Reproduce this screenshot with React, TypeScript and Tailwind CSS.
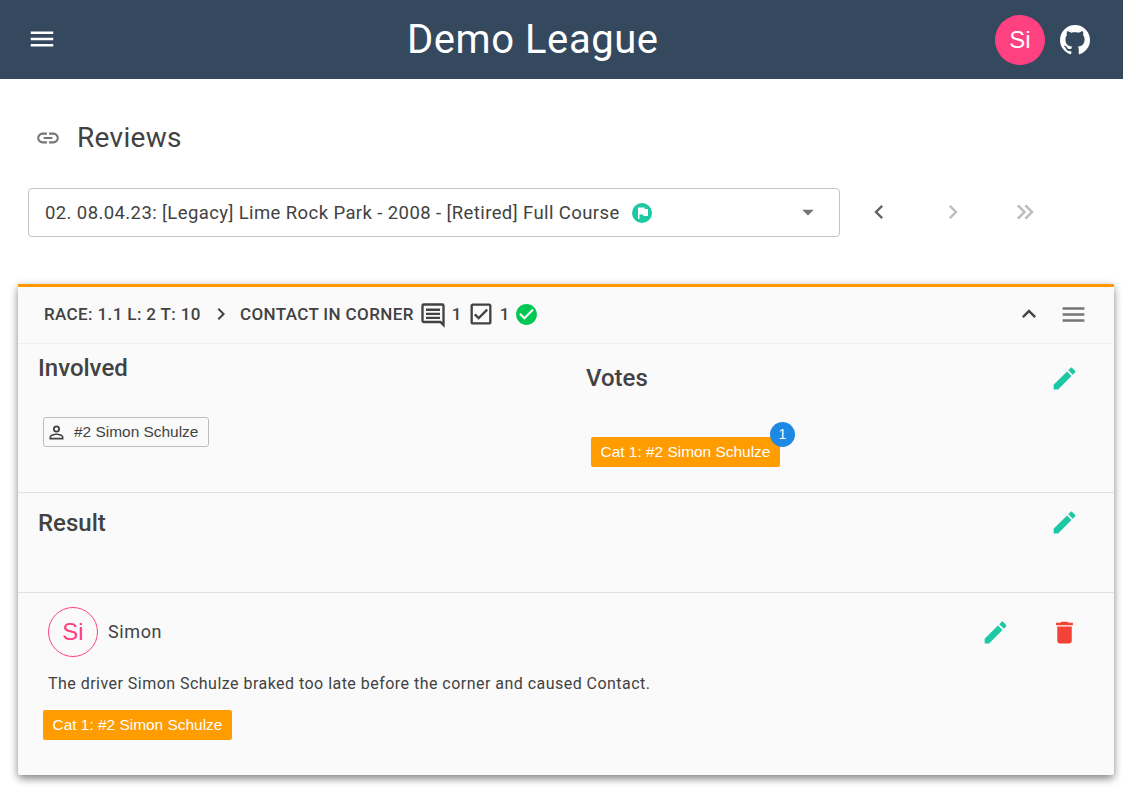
import type { ReactNode } from 'react';

const paths = {
  menu: 'M3,6H21V8H3V6M3,11H21V13H3V11M3,16H21V18H3V16Z',
  link: 'M3.9,12C3.9,10.29 5.29,8.9 7,8.9H11V7H7A5,5 0 0,0 2,12A5,5 0 0,0 7,17H11V15.1H7C5.29,15.1 3.9,13.71 3.9,12M8,13H16V11H8V13M17,7H13V8.9H17C18.71,8.9 20.1,10.29 20.1,12C20.1,13.71 18.71,15.1 17,15.1H13V17H17A5,5 0 0,0 22,12A5,5 0 0,0 17,7Z',
  github:
    'M12,2A10,10 0 0,0 2,12C2,16.42 4.87,20.17 8.84,21.5C9.34,21.58 9.5,21.27 9.5,21C9.5,20.77 9.5,20.14 9.5,19.31C6.73,19.91 6.14,17.97 6.14,17.97C5.68,16.81 5.03,16.5 5.03,16.5C4.12,15.88 5.1,15.9 5.1,15.9C6.1,15.97 6.63,16.93 6.63,16.93C7.5,18.45 8.97,18 9.54,17.76C9.63,17.11 9.89,16.67 10.17,16.42C7.95,16.17 5.62,15.31 5.62,11.5C5.62,10.39 6,9.5 6.65,8.79C6.55,8.54 6.2,7.5 6.75,6.15C6.75,6.15 7.59,5.88 9.5,7.17C10.29,6.95 11.15,6.84 12,6.84C12.85,6.84 13.71,6.95 14.5,7.17C16.41,5.88 17.25,6.15 17.25,6.15C17.8,7.5 17.45,8.54 17.35,8.79C18,9.5 18.38,10.39 18.38,11.5C18.38,15.32 16.04,16.16 13.81,16.41C14.17,16.72 14.5,17.33 14.5,18.26C14.5,19.6 14.5,20.68 14.5,21C14.5,21.27 14.66,21.59 15.17,21.5C19.14,20.16 22,16.42 22,12A10,10 0 0,0 12,2Z',
  menuDown: 'M7,10L12,15L17,10H7Z',
  left: 'M15.41,16.58L10.83,12L15.41,7.41L14,6L8,12L14,18L15.41,16.58Z',
  right: 'M8.59,16.58L13.17,12L8.59,7.41L10,6L16,12L10,18L8.59,16.58Z',
  doubleRight: 'M5.59,7.41L7,6L13,12L7,18L5.59,16.59L10.17,12L5.59,7.41M11.59,7.41L13,6L19,12L13,18L11.59,16.59L16.17,12L11.59,7.41Z',
  up: 'M7.41,15.41L12,10.83L16.59,15.41L18,14L12,8L6,14L7.41,15.41Z',
  comment: 'M4,2H20A2,2 0 0,1 22,4V23L18,19H4A2,2 0 0,1 2,17V4A2,2 0 0,1 4,2M4,4V17H18.83L20,18.17V4H4M6,6.5H18V8.5H6V6.5M6,10H18V12H6V10M6,13.5H18V15.5H6V13.5Z',
  checkbox: 'M19 3H5C3.89 3 3 3.9 3 5V19C3 20.1 3.89 21 5 21H19C20.11 21 21 20.1 21 19V5C21 3.9 20.11 3 19 3M19 5V19H5V5H19M10 17L6 13L7.41 11.58L10 14.17L16.59 7.58L18 9',
  checkCircle: 'M12 2C6.5 2 2 6.5 2 12S6.5 22 12 22 22 17.5 22 12 17.5 2 12 2M10 17L5 12L6.41 10.59L10 14.17L17.59 6.58L19 8L10 17Z',
  flagCircle: 'M12 2A10 10 0 1 0 12 22A10 10 0 1 0 12 2M8 6.5H14.5L15 8H18V15H13.5L13 13.5H9.5V18H8V6.5Z',
  pencil: 'M20.71,7.04C21.1,6.65 21.1,6 20.71,5.63L18.37,3.29C18,2.9 17.35,2.9 16.96,3.29L15.12,5.12L18.87,8.87M3,17.25V21H6.75L17.81,9.93L14.06,6.18L3,17.25Z',
  trash: 'M19,4H15.5L14.5,3H9.5L8.5,4H5V6H19M6,19A2,2 0 0,0 8,21H16A2,2 0 0,0 18,19V7H6V19Z',
  account: 'M12,4A4,4 0 0,1 16,8A4,4 0 0,1 12,12A4,4 0 0,1 8,8A4,4 0 0,1 12,4M12,6A2,2 0 0,0 10,8A2,2 0 0,0 12,10A2,2 0 0,0 14,8A2,2 0 0,0 12,6M12,13C14.67,13 20,14.33 20,17V20H4V17C4,14.33 9.33,13 12,13M12,14.9C9.03,14.9 5.9,16.36 5.9,17V18.1H18.1V17C18.1,16.36 14.97,14.9 12,14.9Z',
};

function Icon({ name, className }: { name: keyof typeof paths; className: string }) {
  return (
    <svg viewBox="0 0 24 24" fill="currentColor" className={`shrink-0 ${className}`} aria-hidden="true">
      <path d={paths[name]} />
    </svg>
  );
}

function Chip({ children }: { children: ReactNode }) {
  return (
    <span className="inline-flex h-[30px] items-center rounded-[2px] bg-[#ff9c00] px-[9.5px] font-['Liberation_Sans',sans-serif] text-[15.45px] text-white">
      {children}
    </span>
  );
}

export default function App() {
  return (
    <div className="h-[791px] overflow-hidden bg-white font-['Roboto',sans-serif] text-[#424242]">
      <header className="relative flex h-[79px] items-center bg-[#35495e] text-white">
        <button type="button" className="ml-[27px]" aria-label="Menu">
          <Icon name="menu" className="h-[30px] w-[30px] translate-y-[-1px]" />
        </button>
        <h1 className="absolute left-[407px] text-[40px] leading-none tracking-[0.55px]">Demo League</h1>
        <div className="ml-auto flex items-center pr-[31px]">
          <span className="flex h-[50px] w-[50px] items-center justify-center rounded-full bg-[#ff4081] font-['Liberation_Sans',sans-serif] text-[24px]">
            Si
          </span>
          <Icon name="github" className="ml-[11px] h-[36px] w-[36px] translate-x-[1px]" />
        </div>
      </header>

      <main>
        <div className="flex h-[78px] items-end pl-[35px]">
          <Icon name="link" className="mb-[6px] h-[26px] w-[26px] text-[#757575]" />
          <h2 className="ml-[16px] text-[28px] leading-[38px] tracking-[0.3px]">Reviews</h2>
        </div>

        <div className="mt-[31px] flex items-center pl-[28px]">
          <div className="flex h-[49px] w-[812px] items-center rounded-[4px] border border-[#c4c4c4] pl-[16px] pr-[17px] text-[18.5px] tracking-[0.4px]">
            <span className="translate-y-px">02. 08.04.23: [Legacy] Lime Rock Park - 2008 - [Retired] Full Course</span>
            <Icon name="flagCircle" className="ml-[10px] h-[24px] w-[24px] text-[#1dc9a4]" />
            <Icon name="menuDown" className="ml-auto h-[28px] w-[28px] -translate-y-px text-[#757575]" />
          </div>
          <div className="ml-[25px] flex -translate-y-px items-center">
            <Icon name="left" className="h-[28px] w-[28px] text-[#616161]" />
            <Icon name="right" className="ml-[46px] h-[28px] w-[28px] text-[#bdbdbd]" />
            <Icon name="doubleRight" className="ml-[43px] h-[30px] w-[30px] text-[#bdbdbd]" />
          </div>
        </div>

        <section className="ml-[18px] mt-[47px] w-[1096px] rounded-b-[2px] border-t-[3px] border-[#ff9800] bg-[#fafafa] shadow-[0_5px_8px_-1px_rgba(0,0,0,0.3),0_2px_8px_0_rgba(0,0,0,0.28)]">
          <div className="flex h-[57px] items-center border-b border-[#f0f0f0] pl-[26px] pr-[26px] text-[17px] font-medium tracking-[0.38px]">
            <span>RACE: 1.1 L: 2 T: 10</span>
            <Icon name="right" className="ml-[8px] h-6 w-6 -translate-y-px" />
            <span className="ml-[7px]">CONTACT IN CORNER</span>
            <Icon name="comment" className="ml-[5px] h-[28px] w-[28px]" />
            <span className="ml-[5px]">1</span>
            <Icon name="checkbox" className="ml-[5px] h-[28px] w-[28px] -translate-y-px" />
            <span className="ml-[5px]">1</span>
            <Icon name="checkCircle" className="ml-[4px] h-[25px] w-[25px] -translate-y-px text-[#00c853]" />
            <Icon name="up" className="ml-auto h-[28px] w-[28px] -translate-y-px" />
            <Icon name="menu" className="ml-[16px] h-[29px] w-[29px] -translate-y-px text-[#757575]" />
          </div>

          <div className="flex h-[149px] border-b border-[#e0e0e0]">
            <div className="w-[548px] pl-[20px]">
              <h3 className="pt-[9px] text-[24px] font-medium leading-[30px]">Involved</h3>
              <span className="ml-[5px] mt-[34px] inline-flex h-[30px] items-center rounded-[3px] border border-[#bdbdbd] pl-[2px] pr-[10px] font-['Liberation_Sans',sans-serif] text-[15.45px]">
                <Icon name="account" className="mr-[7px] h-[21px] w-[21px]" />
                #2 Simon Schulze
              </span>
            </div>
            <div className="flex-1 pl-[20px] pr-[35px]">
              <div className="flex items-center justify-between pt-[19px]">
                <h3 className="text-[24px] font-medium leading-[30px]">Votes</h3>
                <Icon name="pencil" className="h-[29px] w-[29px] text-[#1dc9a4]" />
              </div>
              <div className="relative ml-[5px] mt-[44px] inline-flex">
                <Chip>Cat 1: #2 Simon Schulze</Chip>
                <span className="absolute right-[-15px] top-[-15px] flex h-[25px] w-[25px] items-center justify-center rounded-full bg-[#1e88e5] font-['Liberation_Sans',sans-serif] text-[14px] text-white">
                  1
                </span>
              </div>
            </div>
          </div>

          <div className="flex h-[100px] items-start justify-between border-b border-[#e0e0e0] pl-[20px] pr-[35px] pt-[15px]">
            <h3 className="text-[24px] font-medium leading-[30px]">Result</h3>
            <Icon name="pencil" className="h-[29px] w-[29px] text-[#1dc9a4]" />
          </div>

          <div className="h-[182px] pl-[25px] pr-[35px]">
            <div className="flex items-center pl-[5px] pt-[14px]">
              <span className="flex h-[50px] w-[50px] items-center justify-center rounded-full border border-[#ff4081] font-['Liberation_Sans',sans-serif] text-[24px] text-[#ff4081]">
                Si
              </span>
              <span className="ml-[10px] -translate-y-px text-[18px] tracking-[0.6px]">Simon</span>
              <Icon name="pencil" className="ml-auto mr-[40px] h-[29px] w-[29px] text-[#1dc9a4]" />
              <Icon name="trash" className="h-[29px] w-[29px] text-[#f44336]" />
            </div>
            <p className="pl-[5px] pt-[16px] text-[16px] leading-[22px] tracking-[0.47px]">
              The driver Simon Schulze braked too late before the corner and caused Contact.
            </p>
            <div className="mt-[15px]">
              <Chip>Cat 1: #2 Simon Schulze</Chip>
            </div>
          </div>
        </section>
      </main>
    </div>
  );
}
